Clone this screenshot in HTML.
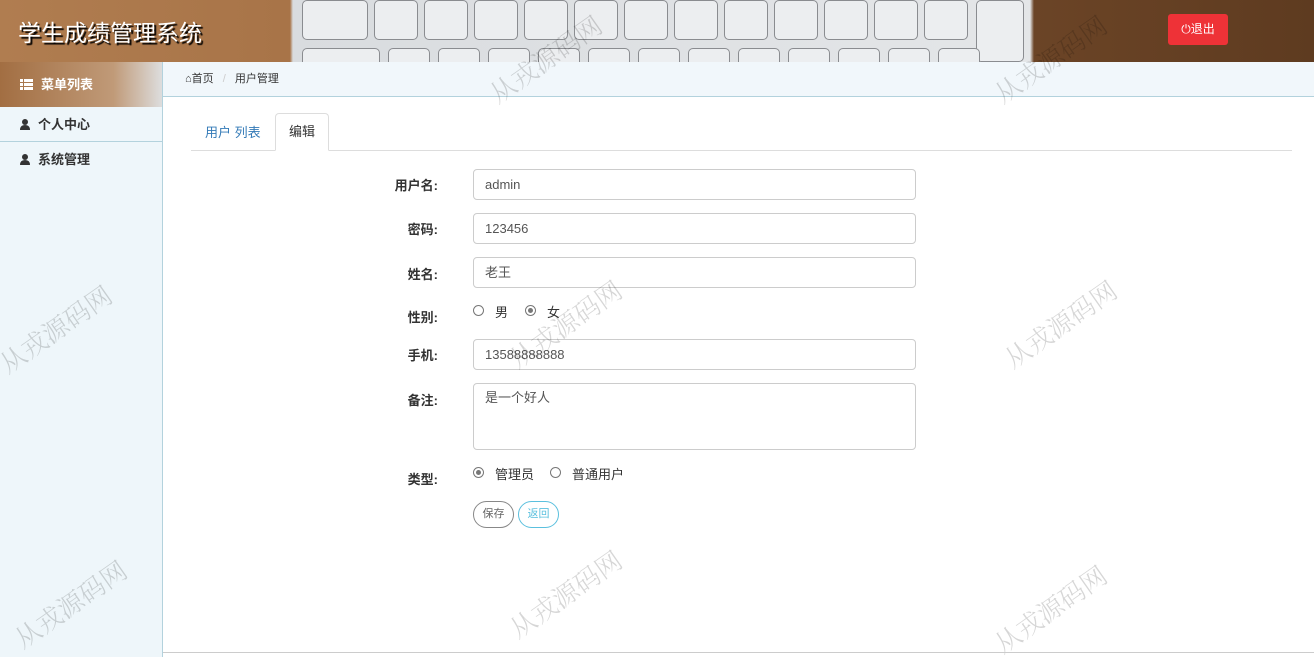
<!DOCTYPE html>
<html><head><meta charset="utf-8"><style>
*{box-sizing:border-box;margin:0;padding:0}
body{width:1314px;height:657px;overflow:hidden;font-family:"Liberation Sans","Noto Sans CJK SC",sans-serif;font-size:13px;color:#333;background:#fff;position:relative}
.hdr{position:absolute;left:0;top:0;width:1314px;height:62px;background:linear-gradient(90deg,#b07d50 0,#a87448 290px,#d9dcdf 293px,#e4e6e8 1030px,#6b4426 1034px,#5e3b20 1314px)}
.kbd{position:absolute;left:300px;top:0;width:730px;height:62px}
.key{position:absolute;border:1px solid #8a8c90;border-radius:5px;background:#eceef0;height:40px}
.title{position:absolute;left:18px;top:14px;font-size:23px;color:#fff;text-shadow:2px 2px 1px #000}
.logout{position:absolute;left:1168px;top:14px;width:60px;height:31px;background:#ee3237;border-radius:3px;color:#fff;font-size:12px;text-align:center;line-height:31px}
.side{position:absolute;left:0;top:62px;width:163px;height:595px;background:#eef6fa;border-right:1px solid #b3d2dd}
.menuh{height:45px;background:linear-gradient(90deg,#a26e42,#c09a78 70%,#ddd 100%);color:#fff;font-weight:bold;font-size:13px;line-height:45px;padding-left:20px}
.item{height:35px;line-height:35px;border-bottom:1px solid #b3d2dd;padding-left:20px;font-weight:bold;font-size:13px}
.item svg{vertical-align:-1px;margin-right:8px}
.crumb{position:absolute;left:163px;top:62px;width:1151px;height:35px;background:#f1f7fb;border-bottom:1px solid #b3d2dd;font-size:11px;line-height:35px;padding-left:22px}
.tabs{position:absolute;left:191px;top:150px;width:1101px;border-top:1px solid #ddd}
.tab1{position:absolute;left:205px;top:122px;color:#337ab7;font-size:13px}
.tab2{position:absolute;left:275px;top:113px;width:54px;height:38px;border:1px solid #ddd;border-bottom:1px solid #fff;border-radius:4px 4px 0 0;background:#fff;text-align:center;line-height:36px}
.lbl{position:absolute;width:60px;text-align:right;left:378px;font-weight:bold;font-size:13px}
.inp{position:absolute;left:473px;width:443px;height:31px;border:1px solid #ccc;border-radius:4px;padding-left:11px;line-height:29px;font-size:13px;color:#555}
.rad{position:absolute;width:11px;height:11px;border:1px solid #777;border-radius:50%;background:#fff}
.rad.on::after{content:"";position:absolute;left:2px;top:2px;width:5px;height:5px;border-radius:50%;background:#777}
.rt{position:absolute;font-size:13px}
.btn{position:absolute;top:501px;height:27px;border-radius:14px;font-size:11px;line-height:25px;text-align:center}
.wm{position:absolute;font-size:26px;color:rgba(0,0,0,.16);transform:rotate(-35deg);font-family:"Noto Serif CJK SC",serif;font-weight:300;white-space:nowrap}
.bot{position:absolute;left:163px;top:652px;width:1151px;border-top:1px solid #ccc}
</style></head><body>
<div class="hdr"><div class="kbd">
<div class="key" style="left:2px;top:0;width:66px"></div>
<div class="key" style="left:74px;top:0;width:44px"></div>
<div class="key" style="left:124px;top:0;width:44px"></div>
<div class="key" style="left:174px;top:0;width:44px"></div>
<div class="key" style="left:224px;top:0;width:44px"></div>
<div class="key" style="left:274px;top:0;width:44px"></div>
<div class="key" style="left:324px;top:0;width:44px"></div>
<div class="key" style="left:374px;top:0;width:44px"></div>
<div class="key" style="left:424px;top:0;width:44px"></div>
<div class="key" style="left:474px;top:0;width:44px"></div>
<div class="key" style="left:524px;top:0;width:44px"></div>
<div class="key" style="left:574px;top:0;width:44px"></div>
<div class="key" style="left:624px;top:0;width:44px"></div>
<div class="key" style="left:676px;top:0;width:48px;height:62px"></div>
<div class="key" style="left:2px;top:48px;width:78px"></div>
<div class="key" style="left:88px;top:48px;width:42px"></div>
<div class="key" style="left:138px;top:48px;width:42px"></div>
<div class="key" style="left:188px;top:48px;width:42px"></div>
<div class="key" style="left:238px;top:48px;width:42px"></div>
<div class="key" style="left:288px;top:48px;width:42px"></div>
<div class="key" style="left:338px;top:48px;width:42px"></div>
<div class="key" style="left:388px;top:48px;width:42px"></div>
<div class="key" style="left:438px;top:48px;width:42px"></div>
<div class="key" style="left:488px;top:48px;width:42px"></div>
<div class="key" style="left:538px;top:48px;width:42px"></div>
<div class="key" style="left:588px;top:48px;width:42px"></div>
<div class="key" style="left:638px;top:48px;width:42px"></div>
</div>
<div class="title">学生成绩管理系统</div>
<div class="logout">⏻退出</div></div>
<div class="side"><div class="menuh"><svg width="13" height="11" style="vertical-align:-1px;margin-right:8px"><rect x="0" y="0" width="3" height="3" fill="#fff"/><rect x="4" y="0" width="9" height="3" fill="#fff"/><rect x="0" y="4" width="3" height="3" fill="#fff"/><rect x="4" y="4" width="9" height="3" fill="#fff"/><rect x="0" y="8" width="3" height="3" fill="#fff"/><rect x="4" y="8" width="9" height="3" fill="#fff"/></svg>菜单列表</div>
<div class="item"><svg width="10" height="11"><circle cx="5" cy="3" r="3" fill="#333"/><path d="M0 11 Q0 6 5 6 Q10 6 10 11Z" fill="#333"/></svg>个人中心</div><div class="item" style="border-bottom:none"><svg width="10" height="11"><circle cx="5" cy="3" r="3" fill="#333"/><path d="M0 11 Q0 6 5 6 Q10 6 10 11Z" fill="#333"/></svg>系统管理</div></div>
<div class="crumb">⌂首页 <span style="color:#ccc;margin:0 6px">/</span> 用户管理</div>
<div class="tabs"></div>
<div class="tab1">用户 列表</div>
<div class="tab2">编辑</div>
<div class="lbl" style="top:175px">用户名:</div><div class="inp" style="top:169px">admin</div>
<div class="lbl" style="top:219px">密码:</div><div class="inp" style="top:213px">123456</div>
<div class="lbl" style="top:264px">姓名:</div><div class="inp" style="top:257px">老王</div>
<div class="lbl" style="top:307px">性别:</div>
<div class="rad" style="left:473px;top:305px"></div><div class="rt" style="left:495px;top:302px">男</div>
<div class="rad on" style="left:525px;top:305px"></div><div class="rt" style="left:547px;top:302px">女</div>
<div class="lbl" style="top:345px">手机:</div><div class="inp" style="top:339px">13588888888</div>
<div class="lbl" style="top:390px">备注:</div><div class="inp" style="top:383px;height:67px;line-height:27px">是一个好人</div>
<div class="lbl" style="top:469px">类型:</div>
<div class="rad on" style="left:473px;top:467px"></div><div class="rt" style="left:495px;top:464px">管理员</div>
<div class="rad" style="left:550px;top:467px"></div><div class="rt" style="left:572px;top:464px">普通用户</div>
<div class="btn" style="left:473px;width:41px;border:1px solid #888;color:#666">保存</div>
<div class="btn" style="left:518px;width:41px;border:1px solid #5bc0de;color:#5bc0de">返回</div>
<div class="wm" style="left:480px;top:40px">从戎源码网</div>
<div class="wm" style="left:985px;top:40px">从戎源码网</div>
<div class="wm" style="left:-10px;top:310px">从戎源码网</div>
<div class="wm" style="left:500px;top:305px">从戎源码网</div>
<div class="wm" style="left:995px;top:305px">从戎源码网</div>
<div class="wm" style="left:5px;top:585px">从戎源码网</div>
<div class="wm" style="left:500px;top:575px">从戎源码网</div>
<div class="wm" style="left:985px;top:590px">从戎源码网</div>
<div class="bot"></div>
</body></html>
